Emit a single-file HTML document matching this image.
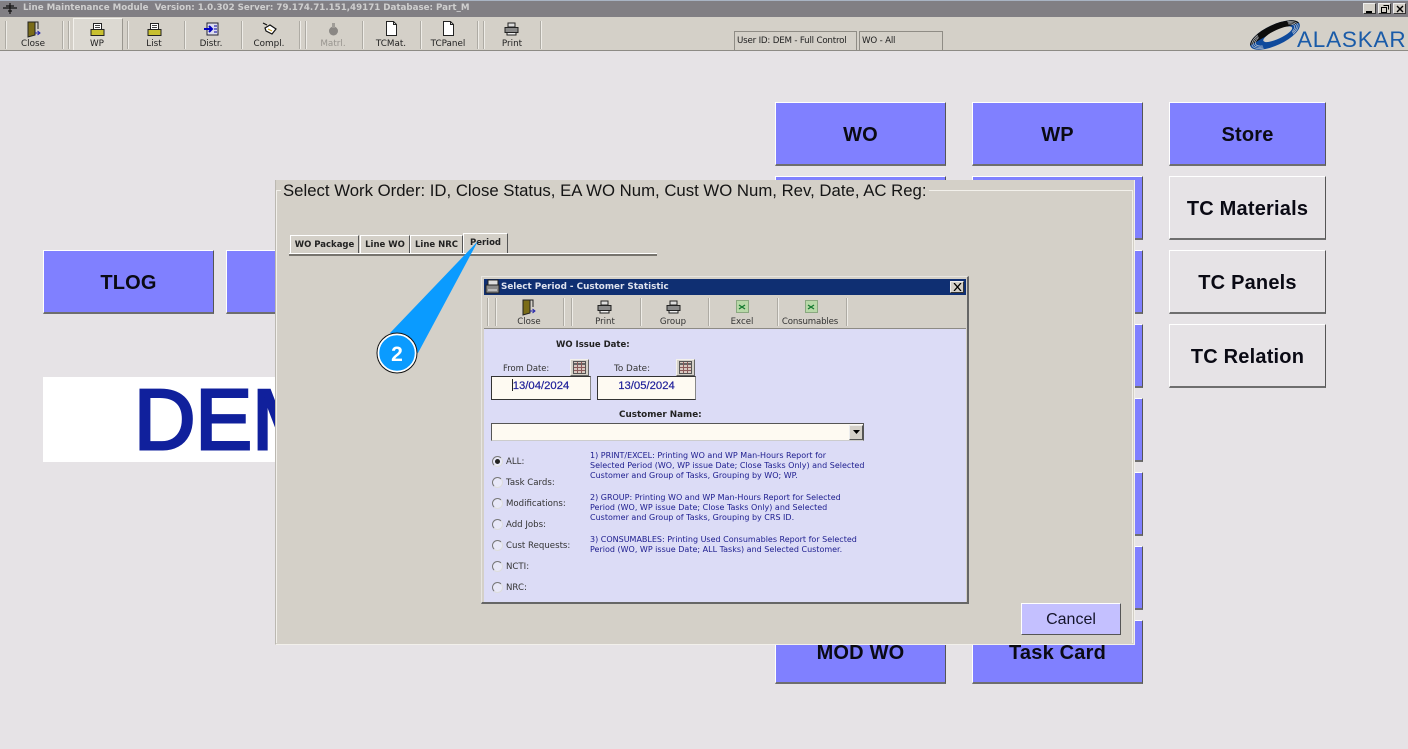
<!DOCTYPE html>
<html><head><meta charset="utf-8"><title>Line Maintenance Module</title>
<style>
html,body{margin:0;padding:0;width:1408px;height:749px;overflow:hidden;background:#e6e3e6;font-family:"Liberation Sans",sans-serif}
.a{position:absolute;white-space:nowrap}
.b{position:absolute;box-sizing:border-box;background:#8080ff;border-top:1px solid #fff;border-left:1px solid #fff;border-right:1px solid #555;border-bottom:2px solid #6e6e6e;font:bold 20px/65px "Liberation Sans",sans-serif;letter-spacing:.2px;text-align:center;color:#0a0a14;height:64px}
.g{background:#e6e3e6}
.s{position:absolute;top:21px;width:1px;height:28px;background:#aeaba4;border-right:1px solid #eeece7}
.t{position:absolute;top:38px;font:8.8px/12px "DejaVu Sans",sans-serif;color:#222;text-align:center;white-space:nowrap}
.st{position:absolute;top:316px;width:80px;font:8.6px/12px "DejaVu Sans",sans-serif;color:#333;text-align:center;white-space:nowrap}
.tab{position:absolute;box-sizing:border-box;top:235px;height:18px;background:#d4d0c8;border-top:1px solid #fff;border-left:1px solid #fff;border-right:1px solid #555;font:bold 8.5px/18px "DejaVu Sans",sans-serif;color:#222;text-align:center;white-space:nowrap}
.r{position:absolute;left:492px;width:11px;height:11px;box-sizing:border-box;border-radius:50%;background:#e8e8f8;border:1px solid #777;border-right-color:#ddd;border-bottom-color:#ddd}
.l{position:absolute;left:506px;font:8.6px/12px "DejaVu Sans",sans-serif;color:#333;white-space:nowrap}
.n{position:absolute;left:590px;font:8px/9.8px "DejaVu Sans",sans-serif;color:#1c1c8e;white-space:nowrap}
</style></head><body>

<!-- title bar -->
<div class="a" style="left:0;top:0;width:1408px;height:17px;background:#817f84;border-top:1px solid #a9b4c4;box-sizing:border-box"></div>
<svg class="a" style="left:3px;top:2px" width="15" height="13" viewBox="0 0 15 13"><path d="M0 6h14M7 1v11M3 4h8M5 9h4" stroke="#111" stroke-width="1.2" fill="none"/></svg>
<div class="a" style="left:23px;top:2px;font:bold 8.7px/13px 'DejaVu Sans',sans-serif;color:#cfcfcf">Line Maintenance Module&nbsp; Version: 1.0.302 Server: 79.174.71.151,49171 Database: Part_M</div>
<div class="a" style="left:1363px;top:3px;width:13px;height:11px;background:#d4d0c8;border:1px solid #eee;border-right-color:#333;border-bottom-color:#333;box-sizing:border-box"><div class="a" style="left:2px;top:7px;width:6px;height:2px;background:#000"></div></div>
<div class="a" style="left:1378px;top:3px;width:13px;height:11px;background:#d4d0c8;border:1px solid #eee;border-right-color:#333;border-bottom-color:#333;box-sizing:border-box"><svg class="a" style="left:1px;top:0" width="10" height="9"><path d="M3.5 1.5h5v4M1.5 3.5h5v5h-5z" stroke="#000" fill="none"/></svg></div>
<div class="a" style="left:1393px;top:3px;width:13px;height:11px;background:#d4d0c8;border:1px solid #eee;border-right-color:#333;border-bottom-color:#333;box-sizing:border-box"><svg class="a" style="left:2px;top:1px" width="8" height="8"><path d="M1 1l6 6M7 1l-6 6" stroke="#000" stroke-width="1.4"/></svg></div>

<!-- toolbar -->
<div class="a" style="left:0;top:17px;width:1408px;height:34px;background:#d4d0c8;border-bottom:1px solid #8d8b85;box-sizing:border-box"></div>
<div class="a" style="left:73px;top:18px;width:50px;height:32px;background:#dcd9d2;border-top:1px solid #f3f1ec;border-left:1px solid #f3f1ec;border-right:1px solid #99968f;box-sizing:border-box"></div>
<div class="s" style="left:5px"></div><div class="s" style="left:62px"></div><div class="s" style="left:68px"></div><div class="s" style="left:127px"></div><div class="s" style="left:184px"></div><div class="s" style="left:241px"></div><div class="s" style="left:299px"></div><div class="s" style="left:305px"></div><div class="s" style="left:362px"></div><div class="s" style="left:420px"></div><div class="s" style="left:477px"></div><div class="s" style="left:483px"></div><div class="s" style="left:540px"></div>

<!-- toolbar icons -->
<svg class="a" style="left:27px;top:21px" width="15" height="17"><path d="M1 1h7v13l-7 2z" fill="#7a6c18" stroke="#222"/><path d="M8 1h3v7" stroke="#222" fill="none"/><path d="M8 12h4M10.500 10l2.500 2-2.500 2" stroke="#2222aa" fill="none"/></svg>
<svg class="a" style="left:90px;top:22px" width="15" height="15"><path d="M3.500 1.500h8v6h-8z" fill="#fff" stroke="#222"/><path d="M5 3.500h5M5 5.500h5" stroke="#444"/><path d="M1 7.500h13v6H1z" fill="#c8c030" stroke="#222"/></svg>
<svg class="a" style="left:147px;top:22px" width="15" height="15"><path d="M3.500 1.500h8v6h-8z" fill="#fff" stroke="#222"/><path d="M5 3.500h5M5 5.500h5" stroke="#444"/><path d="M1 7.500h13v6H1z" fill="#c8c030" stroke="#222"/></svg>
<svg class="a" style="left:204px;top:22px" width="15" height="14"><rect x="3" y="1" width="11" height="12" fill="#dde" stroke="#223"/><path d="M0 7h8M5 4l3 3-3 3" stroke="#0000c0" stroke-width="2" fill="none"/><path d="M10 4h3M10 7h3M10 10h3" stroke="#0000a0"/></svg>
<svg class="a" style="left:262px;top:21px" width="15" height="15"><path d="M1 2l4 2M3 7l5-3 6 4-4 5-6-3z" fill="#fff" stroke="#111" stroke-width="1.200"/><path d="M6 8l4 2" stroke="#c8a020"/></svg>
<svg class="a" style="left:327px;top:21px" width="13" height="15"><circle cx="6.500" cy="10" r="4.500" fill="#8a8784"/><rect x="5" y="2" width="3" height="5" fill="#a09d98"/></svg>
<svg class="a" style="left:385px;top:21px" width="13" height="15"><path d="M1.500.5h7l3 3v11h-10z" fill="#fff" stroke="#222"/><path d="M8.500.5v3h3" fill="none" stroke="#222"/></svg>
<svg class="a" style="left:442px;top:21px" width="13" height="15"><path d="M1.500.5h7l3 3v11h-10z" fill="#fff" stroke="#222"/><path d="M8.500.5v3h3" fill="none" stroke="#222"/></svg>
<svg class="a" style="left:504px;top:22px" width="15" height="14"><path d="M4 1h7v4H4z" fill="#ddd" stroke="#222"/><path d="M1 5.500h13v5H1z" fill="#8a8a8a" stroke="#222"/><path d="M3 10.500h9v2.500H3z" fill="#eee" stroke="#222"/></svg>

<div class="t" style="left:13px;width:40px">Close</div>
<div class="t" style="left:77px;width:40px">WP</div>
<div class="t" style="left:134px;width:40px">List</div>
<div class="t" style="left:191px;width:40px">Distr.</div>
<div class="t" style="left:249px;width:40px">Compl.</div>
<div class="t" style="left:313px;width:40px;color:#98958f">Matrl.</div>
<div class="t" style="left:371px;width:40px">TCMat.</div>
<div class="t" style="left:428px;width:40px">TCPanel</div>
<div class="t" style="left:492px;width:40px">Print</div>

<!-- status -->
<div class="a" style="left:734px;top:31px;width:123px;height:19px;box-sizing:border-box;border-top:1px solid #8f8c85;border-left:1px solid #8f8c85;border-right:1px solid #8f8c85;font:8.700px/18px 'DejaVu Sans',sans-serif;color:#222;padding-left:2px;letter-spacing:-.2px">User ID: DEM - Full Control</div>
<div class="a" style="left:859px;top:31px;width:84px;height:19px;box-sizing:border-box;border-top:1px solid #8f8c85;border-left:1px solid #8f8c85;border-right:1px solid #8f8c85;font:8.700px/18px 'DejaVu Sans',sans-serif;color:#222;padding-left:2px;letter-spacing:-.2px">WO - All</div>

<!-- logo -->
<svg class="a" style="left:1248px;top:18px" width="54" height="34" viewBox="-3 0 58 34">
<defs>
<clipPath id="top"><path d="M-8 17C10 14 30 12 62 17V-20H-8z"/></clipPath>
<clipPath id="ends"><path d="M-8-20H9V50H-8zM44-20H66V50H44z"/></clipPath>
</defs>
<g transform="rotate(-25 26 17)">
<ellipse cx="26" cy="17" rx="29" ry="11" fill="#0f4a9c"/>
<ellipse cx="26" cy="17" rx="29" ry="11" fill="#0c0c0c" clip-path="url(#top)"/>
<ellipse cx="29" cy="17.500" rx="17" ry="4.800" fill="#d4d0c8"/>
<g fill="none" stroke="#c9ced4" stroke-width=".7" clip-path="url(#ends)"><ellipse cx="26" cy="17" rx="27" ry="9.800"/><ellipse cx="26" cy="17" rx="25" ry="8.600"/><ellipse cx="26" cy="17" rx="23" ry="7.400"/></g>
</g></svg>
<div class="a" style="left:1297px;top:28px;font:22.500px/24px 'Liberation Sans',sans-serif;color:#1a5ba8;letter-spacing:.8px">ALASKAR</div>

<!-- main buttons -->
<div class="b" style="left:775px;top:102px;width:171px">WO</div>
<div class="b" style="left:972px;top:102px;width:171px">WP</div>
<div class="b" style="left:1169px;top:102px;width:157px">Store</div>
<div class="b" style="left:775px;top:176px;width:171px"></div><div class="b" style="left:972px;top:176px;width:171px"></div>
<div class="b g" style="left:1169px;top:176px;width:157px">TC Materials</div>
<div class="b" style="left:775px;top:250px;width:171px"></div><div class="b" style="left:972px;top:250px;width:171px"></div>
<div class="b g" style="left:1169px;top:250px;width:157px">TC Panels</div>
<div class="b" style="left:972px;top:324px;width:171px"></div>
<div class="b g" style="left:1169px;top:324px;width:157px">TC Relation</div>
<div class="b" style="left:972px;top:398px;width:171px"></div>
<div class="b" style="left:972px;top:472px;width:171px"></div>
<div class="b" style="left:972px;top:546px;width:171px"></div>
<div class="b" style="left:775px;top:620px;width:171px">MOD WO</div>
<div class="b" style="left:972px;top:620px;width:171px">Task Card</div>
<div class="b" style="left:43px;top:250px;width:171px">TLOG</div>
<div class="b" style="left:226px;top:250px;width:171px"></div>

<!-- DEM banner -->
<div class="a" style="left:43px;top:377px;width:240px;height:85px;background:#fff;overflow:hidden"><div class="a" style="left:91px;top:-1px;font:85px/90px 'Liberation Sans',sans-serif;color:#10209c;-webkit-text-stroke:3px #10209c">DEM</div></div>

<!-- Select Work Order panel -->
<div class="a" style="left:275px;top:180px;width:860px;height:465px;background:#d4d0c8;border-left:1px solid #bbb8b1;border-right:1px solid #f2f0eb;border-bottom:1px solid #f2f0eb;box-sizing:border-box"></div>
<div class="a" style="left:276px;top:190px;width:857px;height:453px;box-sizing:border-box;border:1px solid #f2f0eb;border-bottom:0"></div>
<div class="a" style="left:281px;top:181px;background:#d4d0c8;padding:0 2px;font:16.750px/20px 'Liberation Sans',sans-serif;color:#151515">Select Work Order: ID, Close Status, EA WO Num, Cust WO Num, Rev, Date, AC Reg:</div>

<div class="a" style="left:289px;top:253px;width:368px;height:2px;background:#77746e;border-top:1px solid #fff"></div>
<div class="tab" style="left:290px;width:69px">WO Package</div>
<div class="tab" style="left:360px;width:50px">Line WO</div>
<div class="tab" style="left:410px;width:53px">Line NRC</div>
<div class="tab" style="left:463px;top:233px;width:45px;height:20px;line-height:18px">Period</div>

<!-- Cancel -->
<div class="a" style="left:1021px;top:603px;width:100px;height:32px;box-sizing:border-box;background:#c4c0ff;border-top:1px solid #fff;border-left:1px solid #fff;border-right:1px solid #555;border-bottom:1px solid #555;font:16px/31px 'Liberation Sans',sans-serif;text-align:center;color:#14142a">Cancel</div>

<!-- Select Period dialog -->
<div class="a" style="left:481px;top:276px;width:488px;height:328px;box-sizing:border-box;background:#d4d0c8;border-top:1px solid #e8e6e1;border-left:1px solid #e8e6e1;border-right:2px solid #666;border-bottom:2px solid #666"></div>
<div class="a" style="left:484px;top:279px;width:482px;height:16px;background:#0f2f72"></div>
<svg class="a" style="left:485px;top:279px" width="15" height="16"><path d="M3 1h10v5H3z" fill="#ddd" stroke="#222"/><path d="M1 6h13v8H1z" fill="#8a8a8a" stroke="#222"/><path d="M3 11h9" stroke="#eee"/></svg>
<div class="a" style="left:501px;top:280px;font:bold 8.800px/14px 'DejaVu Sans',sans-serif;color:#dfe3ee">Select Period - Customer Statistic</div>
<div class="a" style="left:950px;top:281px;width:14px;height:12px;box-sizing:border-box;background:#d4d0c8;border:1px solid #eee;border-right-color:#333;border-bottom-color:#333"><svg class="a" style="left:2px;top:1px" width="9" height="8"><path d="M1 0l7 8M8 0l-7 8" stroke="#000" stroke-width="1.300"/></svg></div>
<div class="a" style="left:484px;top:296px;width:482px;height:33px;background:#d4d0c8;border-bottom:1px solid #8d8b85;box-sizing:border-box"></div>
<div class="a" style="left:484px;top:329px;width:482px;height:273px;background:#dcdcf6"></div>
<div class="s" style="left:487px;top:298px"></div><div class="s" style="left:495px;top:298px"></div><div class="s" style="left:563px;top:298px"></div><div class="s" style="left:571px;top:298px"></div><div class="s" style="left:640px;top:298px"></div><div class="s" style="left:708px;top:298px"></div><div class="s" style="left:777px;top:298px"></div><div class="s" style="left:846px;top:298px"></div>

<svg class="a" style="left:522px;top:299px" width="15" height="17"><path d="M1 1h7v13l-7 2z" fill="#7a6c18" stroke="#222"/><path d="M8 1h3v7" stroke="#222" fill="none"/><path d="M8 12h4M10.500 10l2.500 2-2.500 2" stroke="#2222aa" fill="none"/></svg>
<svg class="a" style="left:597px;top:300px" width="15" height="14"><path d="M4 1h7v4H4z" fill="#ddd" stroke="#222"/><path d="M1 5.500h13v5H1z" fill="#8a8a8a" stroke="#222"/><path d="M3 10.500h9v2.500H3z" fill="#eee" stroke="#222"/></svg>
<svg class="a" style="left:666px;top:300px" width="15" height="14"><path d="M4 1h7v4H4z" fill="#ddd" stroke="#222"/><path d="M1 5.500h13v5H1z" fill="#8a8a8a" stroke="#222"/><path d="M3 10.500h9v2.500H3z" fill="#eee" stroke="#222"/></svg>
<svg class="a" style="left:736px;top:300px" width="13" height="13"><rect x=".5" y=".5" width="12" height="12" fill="#b8d8a8" stroke="#8aa880"/><path d="M3 5l6 4M9 5l-6 4" stroke="#157a30" stroke-width="1.300"/></svg>
<svg class="a" style="left:805px;top:300px" width="13" height="13"><rect x=".5" y=".5" width="12" height="12" fill="#b8d8a8" stroke="#8aa880"/><path d="M3 5l6 4M9 5l-6 4" stroke="#157a30" stroke-width="1.300"/></svg>
<div class="st" style="left:489px">Close</div>
<div class="st" style="left:565px">Print</div>
<div class="st" style="left:633px">Group</div>
<div class="st" style="left:702px">Excel</div>
<div class="st" style="left:770px;letter-spacing:-.15px">Consumables</div>

<div class="a" style="left:556px;top:339px;font:bold 8.500px/12px 'DejaVu Sans',sans-serif;color:#222">WO Issue Date:</div>
<div class="a" style="left:503px;top:362px;font:8.400px/12px 'DejaVu Sans',sans-serif;color:#333">From Date:</div>
<div class="a" style="left:614px;top:363px;font:8.800px/12px 'DejaVu Sans',sans-serif;color:#333">To Date:</div>
<div class="a" style="left:570px;top:359px;width:19px;height:17px;box-sizing:border-box;background:#d4d0c8;border:1px solid #f3f1ec;border-right-color:#666;border-bottom-color:#666"><svg class="a" style="left:2px;top:1px" width="13" height="13"><rect x=".5" y=".5" width="12" height="12" fill="#d8c8c0" stroke="#555"/><path d="M1 3h11" stroke="#666" stroke-width="2"/><path d="M4.500 1v11M8.500 1v11M1 6.500h11M1 9.500h11" stroke="#8a5a5a"/></svg></div>
<div class="a" style="left:676px;top:359px;width:19px;height:17px;box-sizing:border-box;background:#d4d0c8;border:1px solid #f3f1ec;border-right-color:#666;border-bottom-color:#666"><svg class="a" style="left:2px;top:1px" width="13" height="13"><rect x=".5" y=".5" width="12" height="12" fill="#d8c8c0" stroke="#555"/><path d="M1 3h11" stroke="#666" stroke-width="2"/><path d="M4.500 1v11M8.500 1v11M1 6.500h11M1 9.500h11" stroke="#8a5a5a"/></svg></div>
<div class="a" style="left:491px;top:376px;width:100px;height:24px;box-sizing:border-box;background:#fefaf2;border:1px solid #333;border-right-color:#888;font:11.300px/18px 'Liberation Sans',sans-serif;color:#20209a;text-align:center;-webkit-text-stroke:.2px #20209a">13/04/2024</div>
<div class="a" style="left:512px;top:379px;width:1px;height:12px;background:#222"></div>
<div class="a" style="left:597px;top:376px;width:99px;height:24px;box-sizing:border-box;background:#fefaf2;border:1px solid #333;border-right-color:#888;font:11.300px/18px 'Liberation Sans',sans-serif;color:#20209a;text-align:center;-webkit-text-stroke:.2px #20209a">13/05/2024</div>
<div class="a" style="left:619px;top:409px;font:bold 8.800px/12px 'DejaVu Sans',sans-serif;color:#222">Customer Name:</div>
<div class="a" style="left:491px;top:423px;width:373px;height:18px;box-sizing:border-box;background:#fefaf2;border:1px solid #555;border-bottom-color:#ccc"></div>
<div class="a" style="left:849px;top:425px;width:14px;height:15px;box-sizing:border-box;background:#d4d0c8;border:1px solid #eee;border-right-color:#555;border-bottom-color:#555"><svg class="a" style="left:2px;top:4px" width="9" height="5"><path d="M1 0h7L4.500 4z" fill="#000"/></svg></div>

<div class="r" style="top:456px"></div><div class="a" style="left:495px;top:459px;width:5px;height:5px;background:#222;border-radius:50%"></div>
<div class="r" style="top:477px"></div><div class="r" style="top:498px"></div><div class="r" style="top:519px"></div><div class="r" style="top:540px"></div><div class="r" style="top:561px"></div><div class="r" style="top:582px"></div>
<div class="l" style="top:456px">ALL:</div>
<div class="l" style="top:477px">Task Cards:</div>
<div class="l" style="top:498px">Modifications:</div>
<div class="l" style="top:519px">Add Jobs:</div>
<div class="l" style="top:540px">Cust Requests:</div>
<div class="l" style="top:561px">NCTI:</div>
<div class="l" style="top:582px">NRC:</div>

<div class="n" style="top:451px">1) PRINT/EXCEL: Printing WO and WP Man-Hours Report for<br>Selected Period (WO, WP issue Date; Close Tasks Only) and Selected<br>Customer and Group of Tasks, Grouping by WO; WP.</div>
<div class="n" style="top:493px">2) GROUP: Printing WO and WP Man-Hours Report for Selected<br>Period (WO, WP issue Date; Close Tasks Only) and Selected<br>Customer and Group of Tasks, Grouping by CRS ID.</div>
<div class="n" style="top:535px">3) CONSUMABLES: Printing Used Consumables Report for Selected<br>Period (WO, WP issue Date; ALL Tasks) and Selected Customer.</div>

<!-- callout -->
<svg class="a" style="left:370px;top:235px" width="120" height="145" viewBox="0 0 120 145"><path d="M108 6L20 98 48 118z" fill="#0a9bff"/><circle cx="27" cy="118" r="19" fill="#0a9bff" stroke="#fff" stroke-width="2.500"/><circle cx="27" cy="118" r="20" fill="none" stroke="#111" stroke-width="1"/><text x="27" y="126" text-anchor="middle" font-family="Liberation Sans" font-weight="bold" font-size="21" fill="#fff">2</text></svg>
</body></html>
